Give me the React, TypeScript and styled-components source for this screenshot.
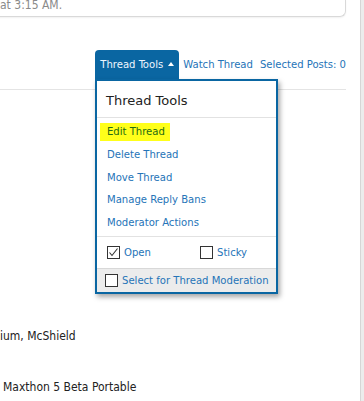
import React from "react";
import styled, { createGlobalStyle } from "styled-components";

const GlobalStyle = createGlobalStyle`
  html, body {
    margin: 0;
    padding: 0;
    background: #ffffff;
    overflow: hidden;
  }
  body {
    font-family: Tahoma, "DejaVu Sans Condensed", "Liberation Sans", sans-serif;
    font-size: 11.2px;
    color: #222;
  }
`;

const Page = styled.div`
  display: flex;
  width: 364px;
  height: 401px;
  overflow: hidden;
`;

const Main = styled.div`
  position: relative;
  flex: 1;
  min-width: 0;
`;

const ScrollEdge = styled.div`
  width: 3px;
  border-left: 1px solid #d6d6d6;
  background: #ececec;
`;

const PostBox = styled.div`
  height: 16px;
  margin: 0 14px 0 -10px;
  border: 1px solid #d9d9d9;
  border-top: none;
  border-radius: 0 0 6px 6px;
  box-shadow: 0 1px 2px rgba(0, 0, 0, 0.06);
  overflow: hidden;
`;

const PostDate = styled.div`
  margin-top: -2px;
  padding-left: 9px;
  line-height: 14px;
  font-size: 12px;
  color: #8a8a8a;
`;

const Toolbar = styled.div`
  display: flex;
  justify-content: flex-end;
  align-items: stretch;
  height: 29px;
  margin-top: 33px;
  padding-right: 14px;
`;

const ToolsTab = styled.div`
  display: flex;
  align-items: center;
  gap: 5px;
  box-sizing: border-box;
  width: 84px;
  padding: 0 0 0 5px;
  background: #0a66a2;
  color: #eef6ff;
  border-radius: 4px 4px 0 0;
  white-space: nowrap;
`;

const Arrow = styled.span`
  width: 0;
  height: 0;
  border-left: 3.5px solid transparent;
  border-right: 3.5px solid transparent;
  border-bottom: 4px solid #ffffff;
  margin-top: -1px;
`;

const BarLink = styled.a<{ $gap: number }>`
  display: flex;
  align-items: center;
  margin-left: ${(p) => p.$gap}px;
  color: #2574b8;
  text-decoration: none;
  white-space: nowrap;
`;

const Divider = styled.div`
  height: 1px;
  margin: 10px 14px 0 0;
  background: #e4e4e4;
`;

const Dropdown = styled.div`
  position: absolute;
  left: 95px;
  top: 79px;
  width: 179px;
  border: 2px solid #0a66a2;
  background: #ffffff;
  box-shadow: 2px 3px 5px rgba(0, 0, 0, 0.35);
`;

const MenuTitle = styled.div`
  height: 36px;
  line-height: 39px;
  padding-left: 9px;
  font-family: "DejaVu Sans", Verdana, sans-serif;
  font-size: 13px;
  color: #222;
  border-bottom: 1px solid #e2e2e2;
`;

const MenuList = styled.ul`
  list-style: none;
  margin: 0;
  padding: 3px 0 1px 10px;
  border-bottom: 1px solid #e2e2e2;
`;

const MenuItem = styled.li`
  line-height: 22.75px;
  color: #2574b8;
`;

const Marked = styled.span`
  display: inline-block;
  margin-left: -7px;
  padding: 0 5px 0 7px;
  line-height: 18px;
  background: #ffff1a;
  color: #256b12;
`;

const OptionRow = styled.div`
  display: grid;
  grid-template-columns: 93px 1fr;
  align-items: center;
  height: 31px;
  padding-left: 10px;
  border-bottom: 1px solid #d8d8d8;
`;

const Option = styled.label`
  display: flex;
  align-items: center;
  gap: 4px;
  color: #2574b8;
`;

const Box = styled.span`
  position: relative;
  flex: none;
  display: inline-block;
  width: 11px;
  height: 11px;
  border: 1px solid #333;
  background: #fff;
`;

const MenuFooter = styled.div`
  display: flex;
  align-items: center;
  gap: 4px;
  height: 23px;
  padding-left: 8px;
  background: #ececec;
  color: #2574b8;
  white-space: nowrap;
`;

const Body = styled.div`
  padding-top: 239px;
  color: #222;
  font-size: 12px;
`;

const BodyLine = styled.div<{ $indent: number; $gap: number }>`
  padding-left: ${(p) => p.$indent}px;
  margin-top: ${(p) => p.$gap}px;
  line-height: 14px;
`;

const Check = () => (
  <svg width="11" height="11" viewBox="0 0 11 11" style={{ position: "absolute", left: 0, top: 0 }}>
    <path d="M1.5 5.5 L4 8.5 L9.5 1.5" fill="none" stroke="#333" strokeWidth="1.1" />
  </svg>
);

const moderatorLinks = ["Delete Thread", "Move Thread", "Manage Reply Bans", "Moderator Actions"];

export default function App() {
  return (
    <Page>
      <GlobalStyle />
      <Main>
        <PostBox>
          <PostDate>at 3:15 AM.</PostDate>
        </PostBox>

        <Toolbar>
          <ToolsTab>
            Thread Tools <Arrow />
          </ToolsTab>
          <BarLink href="#" $gap={4}>Watch Thread</BarLink>
          <BarLink href="#" $gap={7}>Selected Posts: 0</BarLink>
        </Toolbar>
        <Divider />

        <Body>
          <BodyLine $indent={0} $gap={0}>ium, McShield</BodyLine>
          <BodyLine $indent={3} $gap={37}>Maxthon 5 Beta Portable</BodyLine>
        </Body>

        {/* open menu under the tab */}
        <Dropdown>
          <MenuTitle>Thread Tools</MenuTitle>
          <MenuList>
            <MenuItem>
              <Marked>Edit Thread</Marked>
            </MenuItem>
            {moderatorLinks.map((label) => (
              <MenuItem key={label}>{label}</MenuItem>
            ))}
          </MenuList>
          <OptionRow>
            <Option>
              <Box>
                <Check />
              </Box>
              Open
            </Option>
            <Option>
              <Box />
              Sticky
            </Option>
          </OptionRow>
          <MenuFooter>
            <Box />
            Select for Thread Moderation
          </MenuFooter>
        </Dropdown>
      </Main>
      <ScrollEdge />
    </Page>
  );
}
